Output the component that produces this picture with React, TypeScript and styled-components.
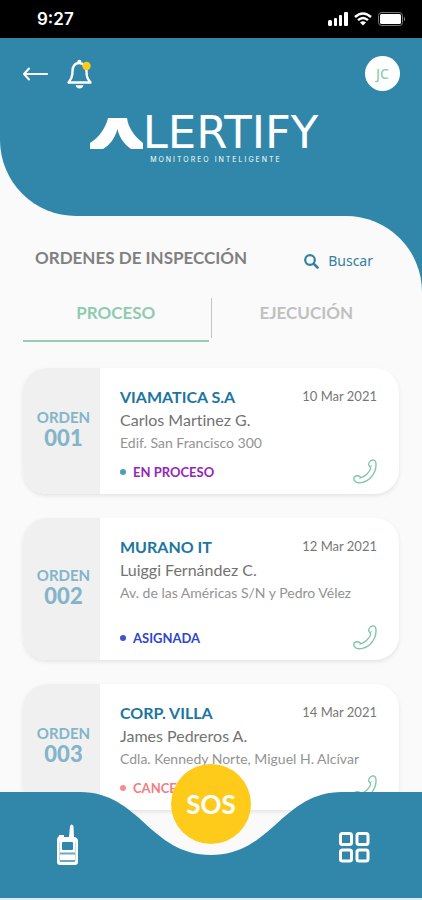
import React from "react";
import styled, { createGlobalStyle } from "styled-components";

const GlobalStyle = createGlobalStyle`
  *, *::before, *::after { box-sizing: border-box; }
  body { margin: 0; background: #fafafa; font-family: Lato, "Open Sans", sans-serif; font-variant-ligatures: none; }
  button { font: inherit; color: inherit; background: none; border: 0; padding: 0; cursor: pointer; }
  svg { display: block; }
`;

const BLUE = "#3087aa";
const GREEN = "#8fcbb0";

const Page = styled.div`
  min-height: 100vh;
  display: flex;
  flex-direction: column;
  background: #fafafa;
`;

const StatusBar = styled.div`
  height: 38px;
  padding: 0 16px 0 37px;
  display: flex;
  align-items: center;
  justify-content: space-between;
  background: #000;
  color: #fff;
  font: 600 17px/22px Inter, sans-serif;
`;

const StatusIcons = styled.div`
  display: flex;
  align-items: center;
  gap: 6px;
`;

const Header = styled.header`
  height: 178px;
  padding-top: 18px;
  background: ${BLUE};
  border-bottom-left-radius: 76px;
`;

const Toolbar = styled.div`
  display: flex;
  align-items: center;
  gap: 17px;
  padding: 0 22px;
  color: #fff;
`;

const Avatar = styled.button`
  && {
    width: 35px;
    height: 35px;
    margin-left: auto;
    border-radius: 50%;
    background: #fff;
    color: ${GREEN};
    font: 500 14px/20px "Noto Sans", sans-serif;
  }
`;

const Brand = styled.div`
  display: flex;
  flex-direction: column;
  align-items: center;
  margin-top: 20px;
  color: #fff;
`;

const BrandRow = styled.div`
  display: flex;
  align-items: center;
  padding-right: 14px;
`;

const BrandName = styled.span`
  font: 400 45px/44px "DejaVu Sans", sans-serif;
`;

const Tagline = styled.span`
  font: 400 7px/10px Inter, sans-serif;
  letter-spacing: 2px;
  padding-left: 10px;
`;

const Curve = styled.div`
  flex: 1;
  display: flex;
  background: linear-gradient(${BLUE} 120px, #fafafa 120px);
`;

const Main = styled.main`
  flex: 1;
  min-width: 0;
  padding: 30px 23px 90px;
  border-top-right-radius: 76px;
  background: #fafafa;
`;

const TitleRow = styled.div`
  display: flex;
  align-items: flex-start;
  justify-content: space-between;
  padding: 0 26px 0 12px;
`;

const Title = styled.h1`
  margin: 0;
  color: #808080;
  font-size: 17px;
  line-height: 24px;
  font-weight: 700;
`;

const Search = styled.button`
  && {
    display: flex;
    align-items: center;
    gap: 9px;
    color: #3280a3;
    font: 400 14px/30px "Noto Sans", sans-serif;
  }
`;

const Tabs = styled.div`
  display: grid;
  grid-template-columns: 1fr 1px 1fr;
  column-gap: 2px;
  margin-top: 22px;
`;

const Tab = styled.button<{ $active?: boolean }>`
  && {
    height: 44px;
    padding-bottom: 14px;
    border-bottom: 2px solid ${(p) => (p.$active ? "#94cfb5" : "transparent")};
    color: ${(p) => (p.$active ? GREEN : "#c0c0c0")};
    font-size: 17px;
    font-weight: 700;
  }
`;

const TabDivider = styled.span`
  height: 40px;
  background: #c4c4c4;
`;

const List = styled.ul`
  list-style: none;
  margin: 26px 0 0;
  padding: 0;
  display: flex;
  flex-direction: column;
  gap: 24px;
`;

const Card = styled.li<{ $tall?: boolean }>`
  display: flex;
  min-height: ${(p) => (p.$tall ? 142 : 126)}px;
  border-radius: 24px;
  background: #fff;
  box-shadow: 0 2px 4px rgba(0, 0, 0, 0.09);
  overflow: hidden;
`;

const OrderBox = styled.div`
  flex: none;
  width: 77px;
  padding: 0 0 4px 4px;
  display: flex;
  flex-direction: column;
  align-items: center;
  justify-content: center;
  background: #f0f0f0;
  color: #83b5ca;
  font-size: 15px;
  line-height: 18px;
  font-weight: 700;
`;

const OrderNumber = styled.strong`
  font-size: 22px;
  line-height: 24px;
`;

const Details = styled.div`
  flex: 1;
  min-width: 0;
  display: flex;
  flex-direction: column;
  padding: 17px 22px 10px 20px;
`;

const Line = styled.div`
  display: flex;
  align-items: center;
  justify-content: space-between;
`;

const Company = styled.h2`
  margin: 0;
  color: #1c76a0;
  font-size: 16px;
  line-height: 23px;
  font-weight: 700;
`;

const DateText = styled.time`
  color: #777;
  font-size: 13px;
  line-height: 23px;
`;

const Person = styled.div`
  color: #727272;
  font-size: 16px;
  line-height: 24px;
`;

const Address = styled.div`
  color: #939393;
  font-size: 14px;
  line-height: 22px;
  white-space: nowrap;
`;

const StatusLine = styled(Line)`
  margin-top: auto;
`;

const Status = styled.span<{ $color: string; $dot: string }>`
  display: flex;
  align-items: center;
  gap: 7px;
  color: ${(p) => p.$color};
  font-size: 13px;
  line-height: 22px;
  font-weight: 700;
  &::before {
    content: "";
    width: 6px;
    height: 6px;
    border-radius: 50%;
    background: ${(p) => p.$dot};
  }
`;

const BottomNav = styled.nav`
  position: fixed;
  left: 0;
  right: 0;
  bottom: 0;
  height: 108px;
  border-bottom: 2px solid #dcebf1;
`;

const Wave = styled.svg`
  width: 100%;
  height: 106px;
`;

const NavItems = styled.div`
  position: absolute;
  inset: 0;
  display: grid;
  grid-template-columns: 1fr 80px 1fr;
  color: #fff;
`;

const NavButton = styled.button<{ $side: "left" | "right" }>`
  && {
    justify-self: ${(p) => (p.$side === "left" ? "start" : "end")};
    align-self: center;
    margin: ${(p) => (p.$side === "left" ? "0 0 0 56px" : "4px 52px 0 0")};
  }
`;

const Sos = styled.button`
  && {
    width: 80px;
    height: 80px;
    margin-top: -28px;
    border-radius: 50%;
    background: #fecb1b;
    font-size: 26px;
    font-weight: 700;
  }
`;

const SignalIcon = () => (
  <svg width="20" height="14" viewBox="0 0 20 14" fill="#fff" aria-hidden="true">
    <rect x="0" y="8" width="4" height="6" rx="1.5" />
    <rect x="6" y="6" width="3" height="8" rx="1" />
    <rect x="11" y="3" width="3" height="11" rx="1" />
    <rect x="16" y="0" width="4" height="14" rx="1" />
  </svg>
);

const WifiIcon = () => (
  <svg width="18" height="14" viewBox="0 0 18 14" fill="none" stroke="#fff" strokeWidth="2.4" aria-hidden="true">
    <path d="M1 5Q9-2 17 5" />
    <path d="M4 8.2Q9 3.8 14 8.2" />
    <path d="M6 10.5Q9 8 12 10.5L9 13.5Z" fill="#fff" stroke="none" />
  </svg>
);

const BatteryIcon = () => (
  <svg width="28" height="14" viewBox="0 0 28 14" aria-hidden="true">
    <rect x="0.5" y="0.5" width="24" height="13" rx="3" fill="none" stroke="#777" />
    <rect x="2" y="2" width="21" height="10" rx="1.5" fill="#fff" />
    <path d="M26 4.5Q28 7 26 9.5Z" fill="#888" />
  </svg>
);

const ArrowIcon = () => (
  <svg width="27" height="14" viewBox="0 0 27 14" fill="none" stroke="#fff" strokeWidth="2" strokeLinecap="round" strokeLinejoin="round">
    <path d="M25 7H2M7 1.5L2 7l5 5.5" />
  </svg>
);

const BellIcon = () => (
  <svg width="27" height="30" viewBox="0 0 27 30" fill="none" stroke="#fff" strokeWidth="2.4" strokeLinejoin="round">
    <path d="M13 4C8.500 4 6.500 8 6.500 12C6.500 18 5 20 2.500 23.500H24.500C21.500 20 20.500 18 20.500 12C20.500 8 17.500 4 13 4Z" />
    <circle cx="13.300" cy="2.700" r="2" fill="#fff" stroke="none" />
    <path d="M9.500 26.200H17.500Q16.500 29.500 13.500 29.500T9.500 26.200Z" fill="#fff" stroke="none" />
    <circle cx="20.500" cy="7" r="4.200" fill="#fecb1b" stroke="none" />
  </svg>
);

const BrandMark = () => (
  <svg width="53" height="31" viewBox="0 0 53 31" fill="#fff" aria-hidden="true">
    <path d="M18 0H37C38 9 44 18 53 25V31H41C34 26 29 19 27.500 11C25 20 20 27 13 31H0V25C9 20 16 9 18 0Z" />
  </svg>
);

const SearchIcon = () => (
  <svg width="15" height="15" viewBox="0 0 15 15" fill="none" stroke="currentColor" strokeWidth="2.2" strokeLinecap="round">
    <circle cx="6" cy="6" r="4.8" />
    <path d="M9.800 9.800L13.500 13.500" strokeWidth="2.6" />
  </svg>
);

const PhoneIcon = () => (
  <svg width="24" height="25" viewBox="0 0 24 25" fill="none" stroke="#83c7a8" strokeWidth="1.4" strokeLinejoin="round">
    <path d="M19.500 1C21.500 .5 22.600 2 22.900 4C23.500 9.500 21 15.500 17 19.500C12.500 23.600 6 24.800 2.800 22.800C1 21.600 .5 20 1 18.600C1.600 17 4 16.400 5.600 17C7.200 17.600 7.600 18.800 9 18.300C12.500 17 16.500 13 17.600 9.600C18 8.200 16 7.400 15.700 5.600C15.500 3.500 17.500 1.500 19.500 1Z" />
    <path d="M16.800 7.600L18.800 6.600M7.600 18.200L6.800 20.200" strokeWidth="1" />
  </svg>
);

const RadioIcon = () => (
  <svg width="23" height="42" viewBox="0 0 23 42">
    <path d="M13 13L14 2Q15.500-1 17.500 2L18 13Z" fill="#fff" />
    <path d="M3 11H8V13H19Q22 14 22 17V38Q22 41 19 41H4Q1 41 1 38V16Q1 13 3 12Z" fill="#fff" />
    <rect x="6" y="18" width="11" height="8" rx="1" fill={BLUE} />
    <path d="M4 29.500H19M4 37H19" stroke="#6aa9c2" strokeWidth="2" />
    <path d="M3.500 18V37M19.500 18V37" stroke="#c4dde7" strokeWidth="1" />
  </svg>
);

const GridIcon = () => (
  <svg width="31" height="31" viewBox="0 0 31 31" fill="none" stroke="#fff" strokeWidth="3">
    <rect x="1.500" y="1.500" width="11" height="11" rx="2" />
    <rect x="18" y="1.500" width="11" height="11" rx="2" />
    <rect x="1.500" y="18" width="11" height="11" rx="2" />
    <rect x="18" y="18" width="11" height="11" rx="2" />
  </svg>
);

const orders = [
  { id: "001", company: "VIAMATICA S.A", date: "10 Mar 2021", person: "Carlos Martinez G.", address: "Edif. San Francisco 300", status: "EN PROCESO", color: "#9326ba", dot: "#4a9dbb" },
  { id: "002", company: "MURANO IT", date: "12 Mar 2021", person: "Luiggi Fernández C.", address: "Av. de las Américas S/N y Pedro Vélez", status: "ASIGNADA", color: "#2f45cc", dot: "#3f55cf", tall: true },
  { id: "003", company: "CORP. VILLA", date: "14 Mar 2021", person: "James Pedreros A.", address: "Cdla. Kennedy Norte, Miguel H. Alcívar", status: "CANCELADA", color: "#f47c80", dot: "#f98a91" },
];

export default function App() {
  return (
    <Page>
      <GlobalStyle />
      <StatusBar>
        <span>9:27</span>
        <StatusIcons>
          <SignalIcon />
          <WifiIcon />
          <BatteryIcon />
        </StatusIcons>
      </StatusBar>
      <Header>
        <Toolbar>
          <button aria-label="Volver"><ArrowIcon /></button>
          <button aria-label="Notificaciones"><BellIcon /></button>
          <Avatar>JC</Avatar>
        </Toolbar>
        <Brand>
          <BrandRow>
            <BrandMark />
            <BrandName>LERTIFY</BrandName>
          </BrandRow>
          <Tagline>MONITOREO INTELIGENTE</Tagline>
        </Brand>
      </Header>
      <Curve>
        <Main>
          <TitleRow>
            <Title>ORDENES DE INSPECCIÓN</Title>
            <Search><SearchIcon />Buscar</Search>
          </TitleRow>
          <Tabs role="tablist">
            <Tab role="tab" aria-selected="true" $active>PROCESO</Tab>
            <TabDivider />
            <Tab role="tab" aria-selected="false">EJECUCIÓN</Tab>
          </Tabs>
          <List>
            {orders.map((o) => (
              <Card key={o.id} $tall={o.tall}>
                <OrderBox>
                  ORDEN
                  <OrderNumber>{o.id}</OrderNumber>
                </OrderBox>
                <Details>
                  <Line>
                    <Company>{o.company}</Company>
                    <DateText>{o.date}</DateText>
                  </Line>
                  <Person>{o.person}</Person>
                  <Address>{o.address}</Address>
                  <StatusLine>
                    <Status $color={o.color} $dot={o.dot}>{o.status}</Status>
                    <button aria-label={`Llamar a ${o.person}`}><PhoneIcon /></button>
                  </StatusLine>
                </Details>
              </Card>
            ))}
          </List>
        </Main>
      </Curve>
      <BottomNav>
        <Wave viewBox="0 0 422 106" preserveAspectRatio="none" aria-hidden="true">
          <path d="M0 0H80C140 0 150 63 211 63C272 63 282 0 342 0H422V106H0Z" fill={BLUE} />
        </Wave>
        <NavItems>
          <NavButton $side="left" aria-label="Radio"><RadioIcon /></NavButton>
          <Sos>SOS</Sos>
          <NavButton $side="right" aria-label="Menú"><GridIcon /></NavButton>
        </NavItems>
      </BottomNav>
    </Page>
  );
}
